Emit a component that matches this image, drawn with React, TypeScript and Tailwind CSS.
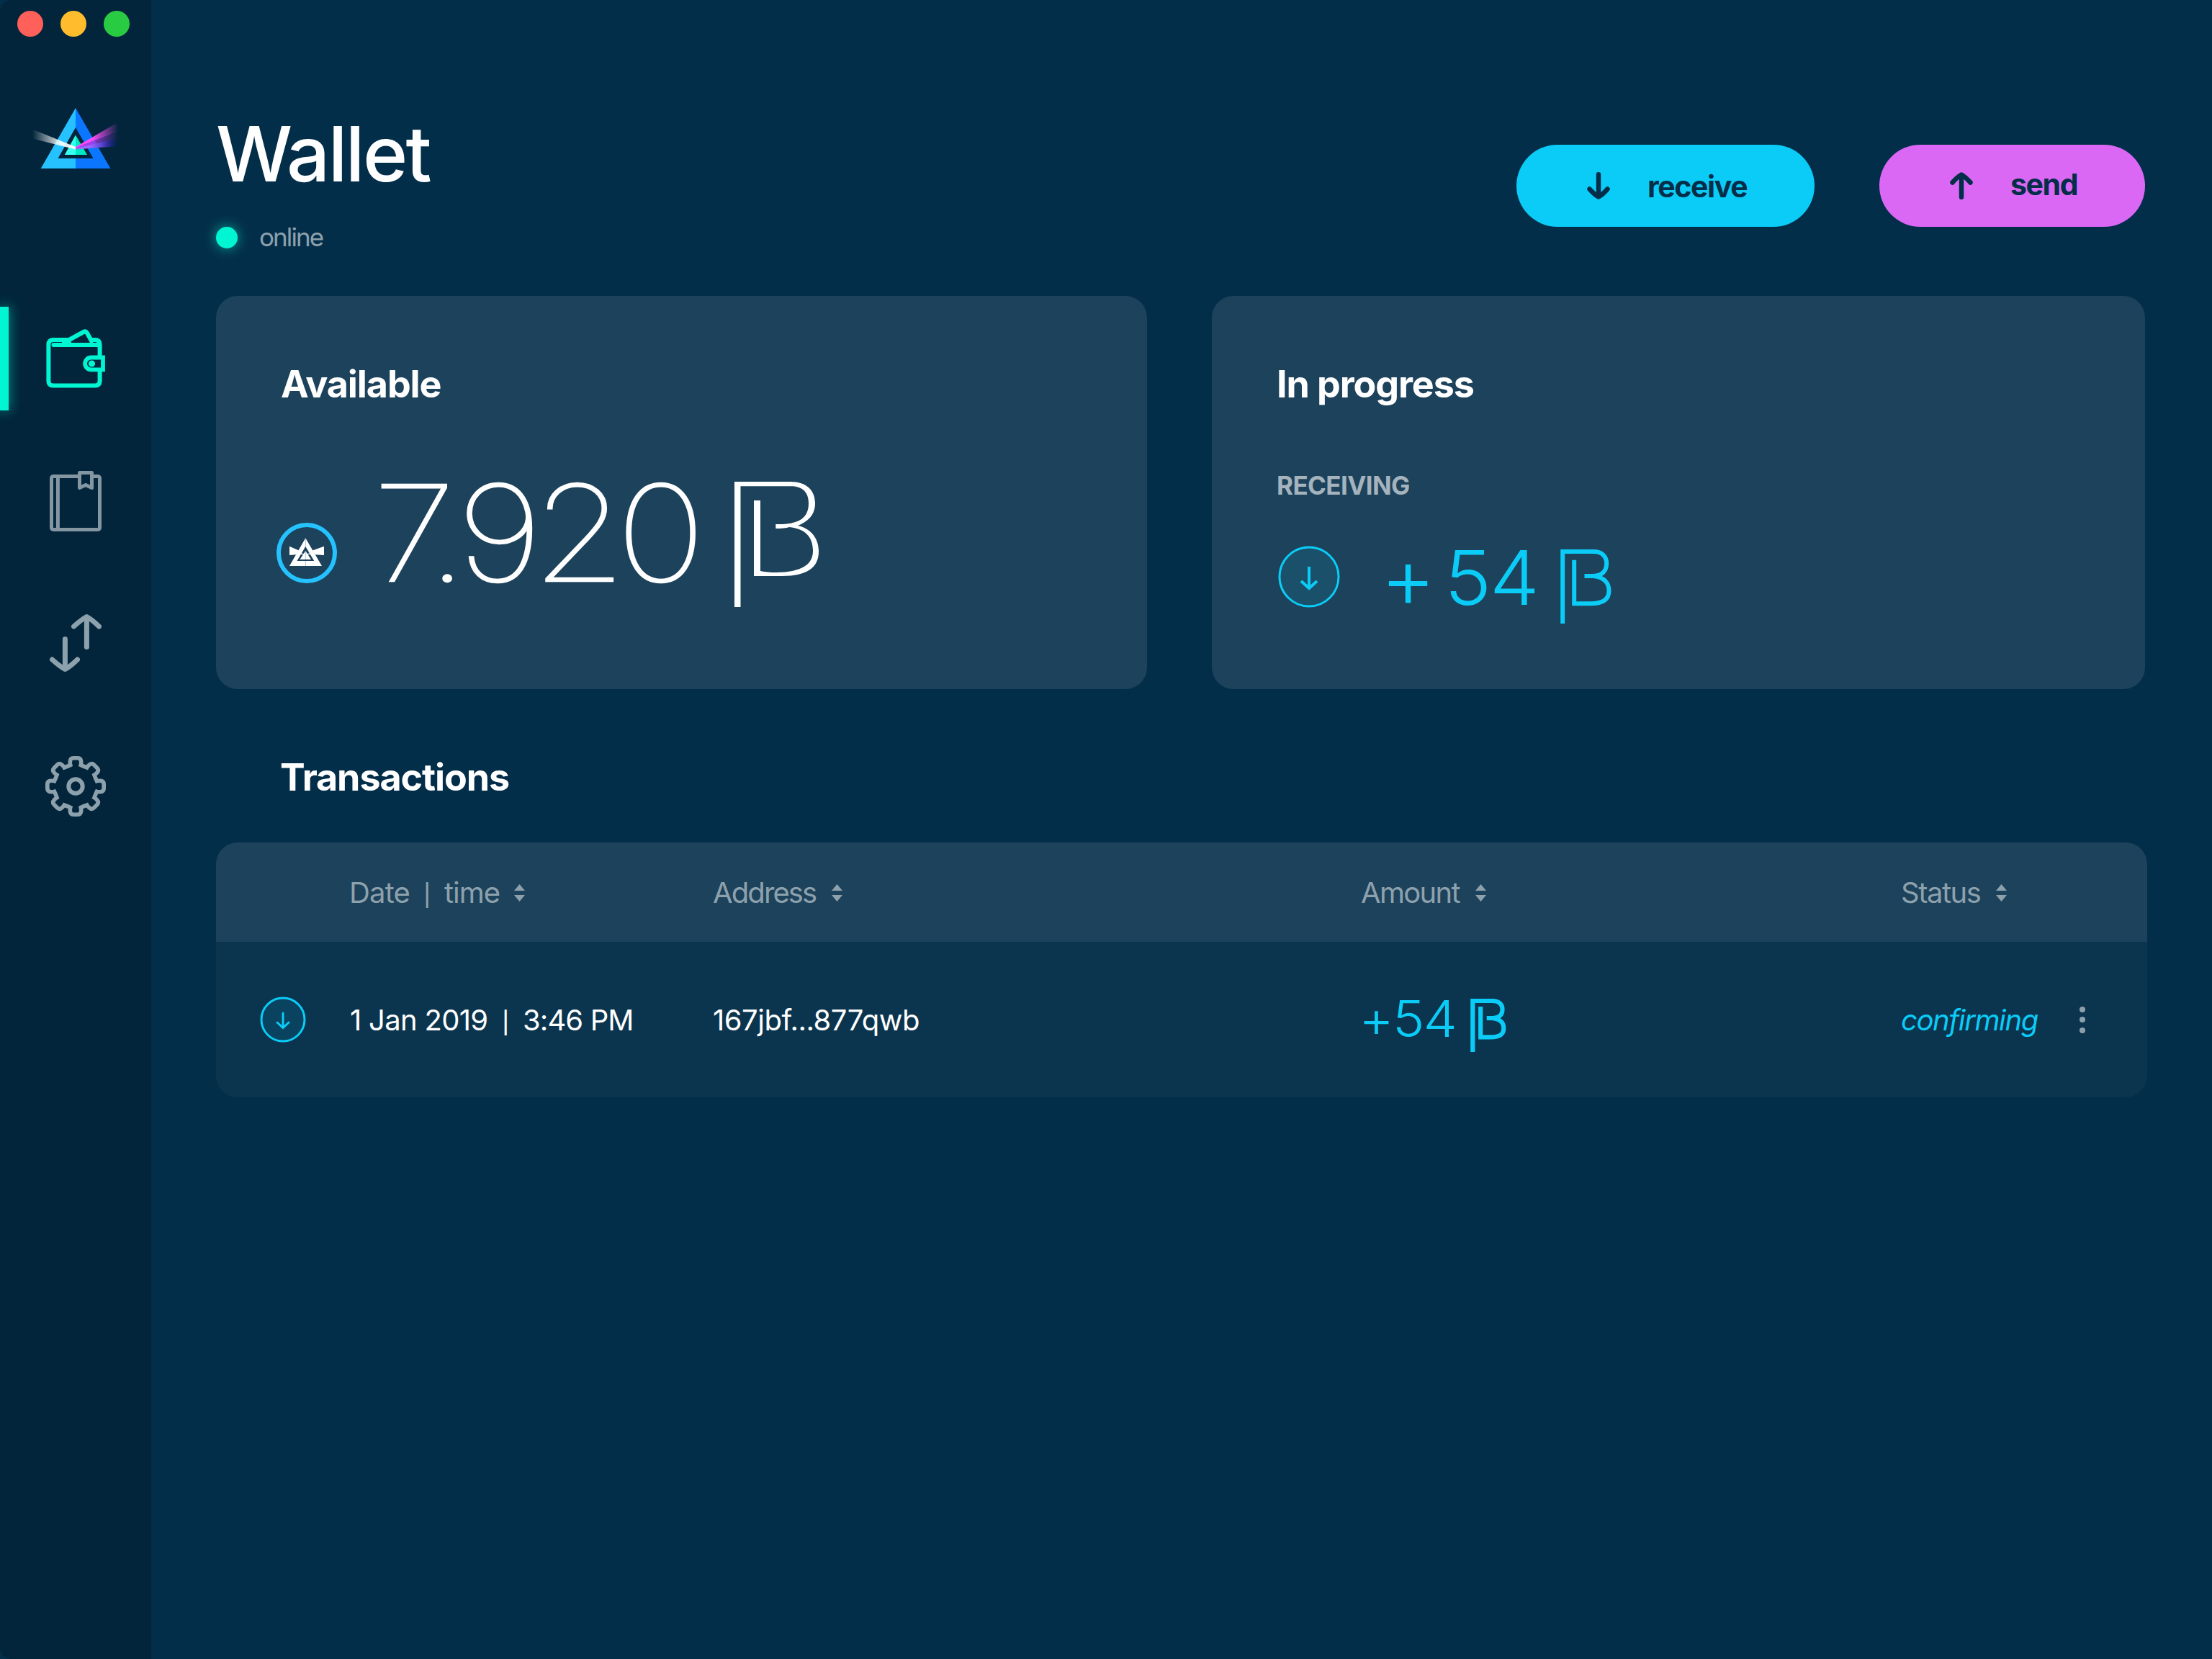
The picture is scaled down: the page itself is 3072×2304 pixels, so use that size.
import clsx from 'clsx'
import type { ReactNode } from 'react'

const columns = [
  { label: 'Address', className: 'tracking-[-1.9px]' },
  { label: 'Amount', className: 'tracking-[-1.7px]' },
  { label: 'Status', className: 'pl-px tracking-[-1.5px]' },
]

function Logo() {
  return (
    <svg className="mt-[99px] h-[84px] w-[120px]" viewBox="45 150 120 84">
      <defs>
        <linearGradient id="beam-in" gradientUnits="userSpaceOnUse" x1="45" y1="0" x2="84" y2="0">
          <stop offset="0" stopColor="#fff" stopOpacity="0" />
          <stop offset="1" stopColor="#fff" stopOpacity="0.9" />
        </linearGradient>
        <linearGradient id="beam-pink" gradientUnits="userSpaceOnUse" x1="128" y1="0" x2="164" y2="0">
          <stop offset="0" stopColor="#fb4df3" />
          <stop offset="1" stopColor="#fb4df3" stopOpacity="0" />
        </linearGradient>
        <linearGradient id="beam-purple" gradientUnits="userSpaceOnUse" x1="122" y1="0" x2="164" y2="0">
          <stop offset="0" stopColor="#a83be8" />
          <stop offset="1" stopColor="#a83be8" stopOpacity="0" />
        </linearGradient>
        <linearGradient id="beam-violet" gradientUnits="userSpaceOnUse" x1="125" y1="0" x2="164" y2="0">
          <stop offset="0" stopColor="#9d68ff" />
          <stop offset="0.4" stopColor="#5f45d8" />
          <stop offset="1" stopColor="#2a16c4" stopOpacity="0" />
        </linearGradient>
      </defs>
      <path d="M105 150L56.7 234H105V220H80.5L105 177Z" fill="#25c2ff" />
      <path d="M105 150L153.4 234H105V220H129.5L105 177Z" fill="#0b76ff" />
      <path d="M105 187.5V215H89.8Z" fill="#39fff0" />
      <path d="M105 187.5V215H121Z" fill="#00e8c4" />
      <path d="M105 204V207.5L45 192.500V179.500Z" fill="url(#beam-in)" />
      <path d="M105 204L162 171L165 181L105 206.500Z" fill="url(#beam-pink)" />
      <path d="M105 205.500L165 180V192L105 207Z" fill="url(#beam-purple)" />
      <path d="M105 206L165 192V203L105 207.500Z" fill="url(#beam-violet)" />
    </svg>
  )
}

function WalletIcon() {
  return (
    <svg className="h-[84px] w-[82px] shrink-0" viewBox="0 0 82 84" fill="none" stroke="#00f6d2" strokeWidth="6">
      <path d="M74.600 38V21.500Q74.600 15 68 15H64M30 15H10Q3.400 15 3.400 21.500V72Q3.400 78.500 10 78.500H68Q74.600 78.500 74.600 72V57" />
      <path d="M10.500 22H74" strokeLinecap="round" />
      <path d="M8 15H32L52 4Q55 2.300 57 5.500L64.500 19M23 21L34 16" strokeLinejoin="round" />
      <path d="M79 39.500H62.500A8.400 8.400 0 0 0 62.500 56.300H79Z" strokeWidth="5.800" />
      <circle cx="63.500" cy="48" r="4.600" fill="#00f6d2" stroke="none" />
    </svg>
  )
}

function BookIcon() {
  return (
    <svg
      className="mt-[113px] h-[84px] w-[72px] shrink-0"
      viewBox="0 0 72 84"
      fill="none"
      stroke="#8496a2"
      strokeWidth="5"
      strokeLinejoin="round"
    >
      <rect x="2.500" y="7.500" width="67" height="74" rx="2.500" />
      <path d="M11.400 7.500V81.500" />
      <path d="M41.500 23.500V2.500H58.500V23.500L50 19.500Z" fill="#02253b" />
    </svg>
  )
}

function TransferIcon() {
  return (
    <svg
      className="mt-[114px] h-[84px] w-[72px] shrink-0"
      viewBox="0 0 72 84"
      fill="none"
      stroke="#8da1ad"
      strokeWidth="7"
      strokeLinecap="round"
      strokeLinejoin="round"
    >
      <path d="M51.400 5V46.500M33.500 18Q44 8.500 51.400 4.500Q58.800 8.500 68.500 18" />
      <path d="M21.400 35.500V77M3.500 64Q14 73.500 21.400 77.500Q28.800 73.500 38.500 64" />
    </svg>
  )
}

const TEETH = [0, 45, 90, 135, 180, 225, 270, 315]

function GearIcon() {
  return (
    <svg
      className="mt-[114px] h-[84px] w-[84px] shrink-0"
      viewBox="-42 -42 84 84"
      fill="none"
      stroke="#8da1ad"
      strokeWidth="5.600"
    >
      {TEETH.map((angle) => (
        <path
          key={angle}
          d="M-11.900 -27.400L-7.300 -29.500Q-7.800 -31 -7.700 -34Q-7.500 -39.200 -3 -39.200H3Q7.500 -39.200 7.700 -34Q7.800 -31 7.300 -29.500L11.900 -27.400"
          transform={`rotate(${angle})`}
        />
      ))}
      <circle r="9.700" strokeWidth="6" />
    </svg>
  )
}

function ButtonArrow({ up = false }: { up?: boolean }) {
  return (
    <svg
      className={clsx('h-[38px] w-[32px]', up && 'rotate-180')}
      viewBox="0 0 32 38"
      fill="none"
      stroke="#032e49"
      strokeWidth="6.500"
      strokeLinecap="round"
      strokeLinejoin="round"
    >
      <path d="M16 3.300V33.500M3.500 23.500Q10 31 16 34.500Q22 31 28.500 23.500" />
    </svg>
  )
}

function Coin() {
  return (
    <svg className="mt-[79px] size-[84px]" viewBox="0 0 84 84">
      <circle cx="42" cy="42" r="39" fill="none" stroke="#25c2ff" strokeWidth="6" />
      <g fill="#fff">
        <path fillRule="evenodd" d="M40.300 21.300L63 60H18ZM40.300 33L28.500 53H52.300Z" />
        <path d="M40.300 39L48 51H32.500Z" />
        <path d="M18 32.700L31 38.500L27.500 44.300L18 45Z" />
        <path d="M66 32.700L50 38.500L53.500 44.300L66 45Z" />
        <path d="M30 41.500L40.300 43.500L51 41.500V44H30Z" />
      </g>
      <path d="M40.300 22V60" stroke="#1d425b" strokeOpacity="0.45" strokeWidth="0.700" />
    </svg>
  )
}

function DownBadge({ small = false }: { small?: boolean }) {
  if (small) {
    return (
      <svg className="ml-[61px] size-16" viewBox="0 0 64 64" fill="none" stroke="#0bccf7" strokeWidth="3">
        <circle cx="32" cy="32" r="30" fill="#0bccf7" fillOpacity="0.1" />
        <path d="M32 23V43M24 36L32 43.500L40 36" strokeLinecap="round" />
      </svg>
    )
  }
  return (
    <svg className="mt-[9px] ml-[2px] size-[86px]" viewBox="0 0 86 86" fill="none" stroke="#0bccf7" strokeWidth="3">
      <circle cx="43" cy="43" r="41" fill="#0bccf7" fillOpacity="0.1" />
      <path d="M43 29V59M32 49L43 59L54 49" strokeWidth="4" />
    </svg>
  )
}

function Sort() {
  return (
    <svg className="h-6 w-[15px]" viewBox="0 0 15 24" fill="#8da1ad">
      <path d="M7.500 0L15 9H0ZM7.500 24L15 15H0Z" />
    </svg>
  )
}

function Divider() {
  return <span className="mt-1.5 w-[29px] text-[30px] font-medium">|</span>
}

function BeamLarge() {
  return (
    <svg className="mt-[22px] h-[174px] w-[117px]" viewBox="0 0 117 174" fill="#fff">
      <path d="M0 0H78C100 0 112 12 112 30C112 46 102 55.500 88 61C106 65 117 78 117 97C117 119 101 131 66 131H27V26H36V124C43 125.500 50 126 58 126C92 125.500 109 116 109 96C109 76 98 65.500 76 63C72 64.500 66 65 57.300 65V59H66C90 58 103 50 103 30C103 14 94 6.300 78 6.300H8.500V174H0Z" />
    </svg>
  )
}

function BeamMedium() {
  return (
    <svg className="mt-[14px] h-[103px] w-[71px]" viewBox="0 0 71 103" fill="none" stroke="#0bccf7" strokeWidth="6">
      <path d="M3.200 103V3H46C59 3 64.200 11 64.200 19.500C64.200 30 58 37 44 37H33.500M46 37C60 38.500 67.500 46 67.500 57.500C67.500 70 58 75.300 42 75.300H19.200V14.700" />
    </svg>
  )
}

function BeamSmall() {
  return (
    <svg className="mt-[15px] h-[74px] w-[50px]" viewBox="0 0 50 74" fill="none" stroke="#0bccf7" strokeWidth="6.200">
      <path d="M3.300 74V3H30C40 3 44.500 8 44.500 15C44.500 23 39 27 30 27H22.700M30 27C41 28 46.300 33 46.300 41C46.300 50 40 53.300 28 53.300H14.200V11" />
    </svg>
  )
}

function Card({ title, className, children }: { title: string; className: string; children: ReactNode }) {
  return (
    <section className={clsx('h-[546px] rounded-[30px] bg-[#1d425b] pt-[97px]', className)}>
      <h2 className="pl-[90px] text-[52px] leading-none font-bold tracking-[-1.1px]">{title}</h2>
      {children}
    </section>
  )
}

export default function App() {
  return (
    <div className="flex h-[2304px] w-[3072px] bg-[#032e49] font-['Inter',sans-serif] text-white">
      <aside className="relative flex w-[210px] shrink-0 flex-col items-center rounded-l-[16px] bg-[#02253b] pt-[15px]">
        <div className="flex gap-6 self-start pl-6">
          <span className="size-9 rounded-full bg-[#ff6059]" />
          <span className="size-9 rounded-full bg-[#ffbd2e]" />
          <span className="size-9 rounded-full bg-[#29cb42]" />
        </div>
        <Logo />
        <span className="absolute top-[426px] left-0 h-36 w-3 bg-[#00f6d2] shadow-[0_0_18px_rgba(0,246,210,0.6)]" />
        <nav className="mt-[223px] flex flex-col items-center">
          <WalletIcon />
          <BookIcon />
          <TransferIcon />
          <GearIcon />
        </nav>
      </aside>

      <main className="w-[2772px] pt-[161px] pl-[90px]">
        <header className="flex h-[250px] w-[2679px] justify-between">
          <div>
            <h1 className="text-[106px] leading-[105px] font-medium tracking-[-2.6px]">Wallet</h1>
            <div className="mt-[46px] flex items-center gap-[30px]">
              <span className="size-[30px] rounded-full bg-[#00f6d2] shadow-[0_0_18px_rgba(0,246,210,0.6)]" />
              <span className="text-[35px] leading-none tracking-[-1.9px] text-[#8da1ad]">online</span>
            </div>
          </div>
          <div className="mt-10 flex h-[114px] gap-[90px] text-[41px] leading-none font-bold text-[#032e49]">
            <button className="flex w-[414px] items-center gap-[52px] rounded-full bg-[#0bccf7] pl-[98px] tracking-[-1.4px]">
              <ButtonArrow />
              <span className="pt-0.5">receive</span>
            </button>
            <button className="flex w-[369px] items-center gap-[52px] rounded-full bg-[#da68f5] pl-[98px] tracking-[-1.4px]">
              <ButtonArrow up />
              <span className="pb-[4px]">send</span>
            </button>
          </div>
        </header>

        <div className="flex gap-[90px]">
          <Card title="Available" className="w-[1293px]">
            <div className="mt-[87px] flex items-start pl-[84px]">
              <Coin />
              <span className="ml-[50px] w-[502px] origin-left scale-x-114 text-[184px] leading-[186px] font-thin tracking-[-12px] [-webkit-text-stroke:2.5px_white]">
                7.920
              </span>
              <BeamLarge />
            </div>
          </Card>
          <Card title="In progress" className="w-[1296px]">
            <div className="mt-[97px] pl-[90px] text-[35px] leading-none font-bold tracking-[-0.6px] text-[#a4b3bd]">
              RECEIVING
            </div>
            <div className="mt-[57px] flex items-start pl-[90px] text-[105px] leading-none font-light text-[#0bccf7]">
              <DownBadge />
              <span className="-mt-[7px] ml-[56px] w-[89px] text-[118px]">+</span>
              <span className="w-[161px] origin-left scale-x-105 tracking-[-2.5px]">54</span>
              <BeamMedium />
            </div>
          </Card>
        </div>

        <h2 className="mt-[97px] pl-[89px] text-[52px] leading-none font-bold tracking-[-1.1px]">Transactions</h2>

        <div className="mt-[64px] w-[2682px] overflow-hidden rounded-[30px] text-[40px] leading-none">
          <div className="grid h-[138px] grid-cols-[187px_503px_900px_749px_1fr] items-center bg-[#1d425b] pt-px text-[#8da1ad]">
            <span />
            <div className="-ml-0.5 flex items-center">
              <span className="w-[103px] tracking-[-0.8px]">Date</span>
              <Divider />
              <span className="w-[97px] tracking-[-1px]">time</span>
              <Sort />
            </div>
            {columns.map((col) => (
              <div key={col.label} className="flex items-center gap-[22px]">
                <span className={col.className}>{col.label}</span>
                <Sort />
              </div>
            ))}
          </div>
          <div className="grid h-[216px] grid-cols-[187px_503px_900px_749px_1fr] items-center bg-[#0b344e]">
            <DownBadge small />
            <div className="-ml-px flex items-center pt-0.5">
              <span className="w-[211px] tracking-[-0.7px]">1 Jan 2019</span>
              <Divider />
              <span className="tracking-[-0.9px]">3:46 PM</span>
            </div>
            <span className="pt-0.5 tracking-[-0.5px]">167jbf...877qwb</span>
            <div className="-ml-[3px] flex items-center text-[#0bccf7]">
              <span className="-mt-[3px] w-[155px] origin-left scale-x-107 text-[70px] font-light tracking-[-1.7px]">
                +54
              </span>
              <BeamSmall />
            </div>
            <div className="flex items-center">
              <span className="w-[249px] pt-0.5 pl-px tracking-[-1.4px] text-[#0bccf7] italic">confirming</span>
              <div className="flex flex-col gap-[6.500px]">
                <i className="size-2 rounded-full bg-[#8da1ad]" />
                <i className="size-2 rounded-full bg-[#8da1ad]" />
                <i className="size-2 rounded-full bg-[#8da1ad]" />
              </div>
            </div>
          </div>
        </div>
      </main>
    </div>
  )
}
